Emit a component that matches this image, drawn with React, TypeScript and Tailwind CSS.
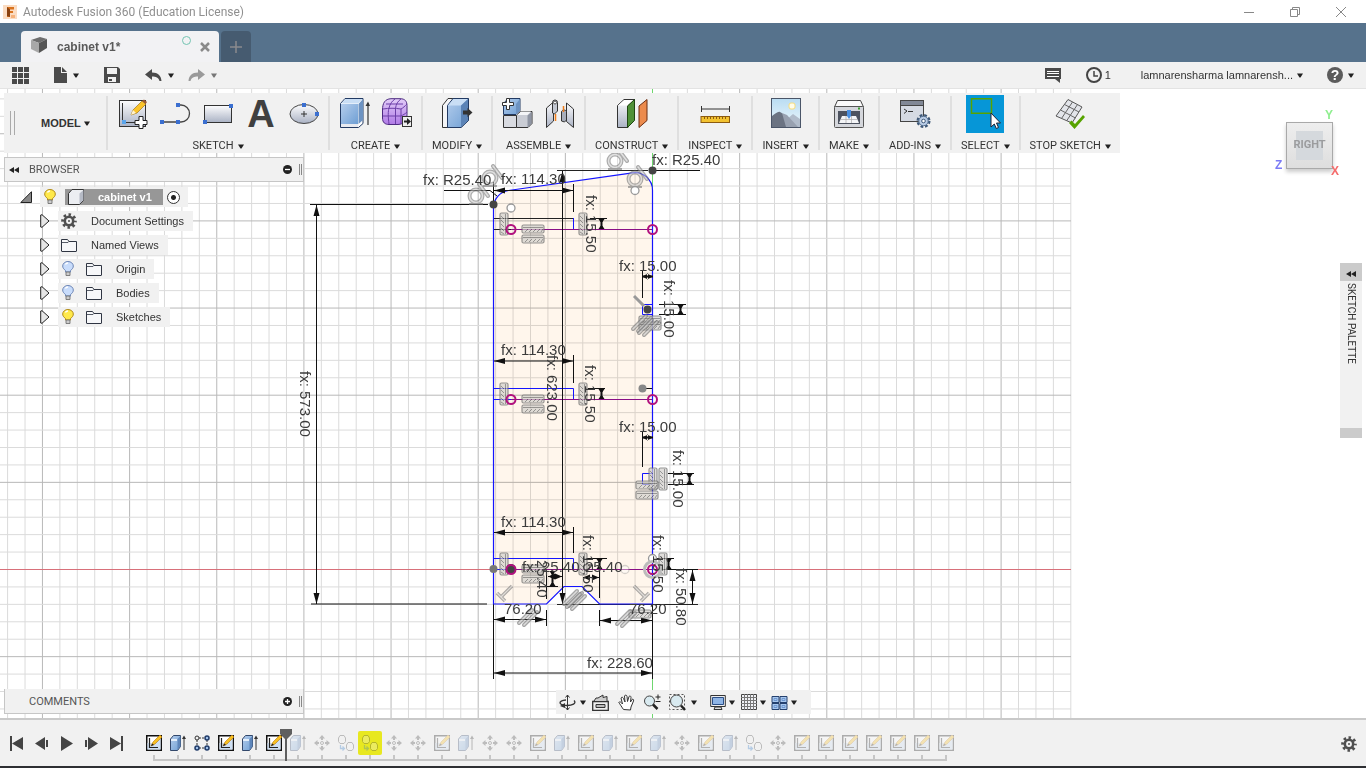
import type { ReactNode } from 'react';
import clsx from 'clsx';

const Caret = ({ className = 'text-[#222]' }: { className?: string }) => (
  <svg width="6" height="5" viewBox="0 0 6 5" className={clsx('shrink-0', className)}>
    <path d="M0 .5h6L3.500 4.500h-1z" fill="currentColor" />
  </svg>
);

const Gradients = () => (
  <svg className="absolute size-0" aria-hidden="true">
    <defs>
      <linearGradient id="steel" x1="0" y1="0" x2="0" y2="1">
        <stop offset="0" stopColor="#fdfdfe" />
        <stop offset="1" stopColor="#aab2c4" />
      </linearGradient>
      <linearGradient id="blue" x1="0" y1="0" x2="1" y2="1">
        <stop offset="0" stopColor="#b4cdec" />
        <stop offset="1" stopColor="#6f9fd4" />
      </linearGradient>
      <linearGradient id="purple" x1="0" y1="0" x2="0" y2="1">
        <stop offset="0" stopColor="#e2cdf8" />
        <stop offset="1" stopColor="#b07ae6" />
      </linearGradient>
      <linearGradient id="sky" x1="0" y1="0" x2="0" y2="1">
        <stop offset="0" stopColor="#b9dcf2" />
        <stop offset="1" stopColor="#eef8fd" />
      </linearGradient>
    </defs>
  </svg>
);

const Icon = ({ size = 32, children }: { size?: number; children: ReactNode }) => (
  <svg
    width={size}
    height={size}
    viewBox={`0 0 ${size} ${size}`}
    fill="none"
    className="shrink-0"
    aria-hidden="true"
  >
    {children}
  </svg>
);

const Node = ({ x, y }: { x: number; y: number }) => (
  <rect x={x - 2} y={y - 2} width="4" height="4" fill="#3b6fd0" />
);

const CreateSketchIcon = () => (
  <Icon>
    <rect x="3.500" y="2.500" width="26" height="26" fill="url(#steel)" stroke="#333" />
    <path d="M6.500 5v20M6 24.500h16" stroke="#333" />
    <rect x="6" y="22" width="4" height="4" fill="#5aa5ec" />
    <path d="m15 17 2-5 9-9 4 3-9 9z" fill="#fbc42a" stroke="#a0761a" strokeWidth=".7" />
    <path d="m26 3 2-1.500 3 2.500-1.500 2z" fill="#9c5a32" />
    <path d="m15 17 2-5 3 3z" fill="#fff3d0" />
    <path d="M23 18.500h4v4h4v4h-4v4h-4v-4h-4v-4h4z" fill="#fff" stroke="#222" />
  </Icon>
);

const LineIcon = () => (
  <Icon>
    <path d="M3 24h19a8.500 8.500 0 0 0 0-17h-3" stroke="#444" strokeWidth="1.300" />
    <Node x={3} y={24} />
    <Node x={19} y={24} />
    <Node x={19} y={7} />
  </Icon>
);

const RectangleIcon = () => (
  <Icon>
    <rect x="2.500" y="7.500" width="27" height="17" fill="url(#steel)" stroke="#333" />
    <Node x={3} y={24} />
    <Node x={29} y={8} />
  </Icon>
);

const TextIcon = () => (
  <span className="flex size-8 items-center justify-center font-['Liberation_Sans',sans-serif] text-[38px] leading-8 font-bold text-[#404040]">
    A
  </span>
);

const EllipseIcon = () => (
  <Icon>
    <ellipse cx="16" cy="16" rx="14" ry="9.500" fill="url(#steel)" stroke="#444" />
    <path d="M16 13v6M13 16h6" stroke="#333" />
    <Node x={16} y={7} />
    <Node x={29} y={16} />
  </Icon>
);

const ExtrudeIcon = () => (
  <Icon>
    <path d="M2.500 5.500 7 .5h18v25l-4.500 4h-18z" fill="#fff" stroke="#223a63" />
    <path d="M3 6h17v20H3z" fill="url(#blue)" />
    <path d="m3 5.500 4.500-4.500h17L20 5.500z" fill="#c9def5" />
    <path d="M20.500 6 25 1v21l-4.500 4z" fill="#6d93c2" />
    <path d="M3 26h17.500v3H3z" fill="#e8eaf0" />
    <path d="M30 5v22" stroke="#333" strokeWidth="1.200" />
    <path d="m27.500 8 2.500-4.500L32 8z" fill="#333" />
  </Icon>
);

const FormIcon = () => (
  <Icon>
    <path d="M1.500 12C1.500 5 4 1 10 .7h9c5 0 7 2.500 7 7v9c0 6-3 9.500-9 9.800H8c-4 0-6.500-2-6.500-6.500z" fill="url(#purple)" stroke="#4d2a80" />
    <path d="M2 11c6-1 12-1 18 0 2-1 4-3 6-5M2 18h18c2-1 4-2 6-4M8 26c-1-7-1-13 0-16 1-4 3-7 6-9M14.500 26V10.500C15 6 17 3 20 1M20 26V11M5 6h17" stroke="#6c3fa8" />
    <rect x="21.500" y="18.500" width="9" height="10" fill="#eee" stroke="#333" />
    <path d="M23 22.500h3v-2.500l4 3.500-4 3.500v-2.500h-3z" fill="#222" />
  </Icon>
);

const ModifyIcon = () => (
  <Icon>
    <path d="M1.500 7.500 7 .5h20v22l-7 7h-18.500z" fill="#f4f5f7" stroke="#333" />
    <path d="M6.500 7.500 12 .5h15.500v22l-7.500 7H6.500z" fill="url(#blue)" stroke="#223a63" />
    <path d="M7 7.500 12.500 1H27l-7 6.500z" fill="#c9def5" />
    <path d="M20 7.500 27 1v21.500l-7 6.500z" fill="#5b83b6" />
    <path d="M22 12.500h4.500V10l5 4.500-5 4.500v-2.500H22z" fill="#333" />
  </Icon>
);

const AssembleIcon = () => (
  <Icon>
    <path d="M2.500 5.500 7 .5h12v12l-4 4H2.500z" fill="url(#blue)" stroke="#223a63" />
    <path d="m15 6 4-5v11.500l-4 4z" fill="#6d93c2" />
    <path d="M2.500 17.500h13v12h-13z" fill="#d9dbe1" stroke="#333" />
    <path d="m15.500 17.500 4-4h11.500v12l-4 4H15.500z" fill="#c9ccd4" stroke="#333" />
    <path d="m16 17 4-3.500h10L26.500 17z" fill="#f4f5f7" />
    <path d="m26.500 17.500 4-3.500v11.500l-4 4z" fill="#8f95a3" />
    <path d="M5.500.5h3v4h4v3h-4v4h-3v-4h-4v-3h4z" fill="#fff" stroke="#333" />
  </Icon>
);

const JointIcon = () => (
  <Icon>
    <path d="m2.500 10 7-6V23l-7 6.500z" fill="url(#steel)" stroke="#333" />
    <path d="M8.500 15V4.500a2.500 2.500 0 0 1 5 0V13l-3 3z" fill="#c3c8d2" stroke="#333" />
    <circle cx="11" cy="4.500" r="1.500" fill="#fff" stroke="#555" />
    <path d="m22.500 5 7 6v18.500l-7-6z" fill="url(#steel)" stroke="#333" />
    <path d="M17.500 23V13.500c1-2 4-2 5 0v8.500l-2 2z" fill="#a8aebb" stroke="#333" />
    <path d="M11.500 16v7M19.500 8v6" stroke="#ef7d1a" strokeWidth="1.500" />
  </Icon>
);

const ConstructIcon = () => (
  <Icon>
    <path d="M1.500 7.500 8 1.500h11l-7 6v22H1.500z" fill="url(#steel)" stroke="#333" />
    <path d="m2 7.500 6.500-5.500H18l-6.500 5.500z" fill="#fff" />
    <path d="m11.500 8 7-6.500v21l-7 7z" fill="#4f9138" stroke="#1f4712" />
    <path d="m23 8 8-6.500v21l-8 7z" fill="#ec8b4d" stroke="#6b2d12" />
  </Icon>
);

const InspectIcon = () => (
  <Icon>
    <path d="M2 11h28M2.500 8v6M30.500 8v6" stroke="#333" />
    <rect x="2" y="18.500" width="28.500" height="6" fill="#f2c230" stroke="#8c5b10" />
    <path d="M5.500 19v2M8.500 19v2M11.500 19v2M14.500 19v2M17.500 19v2M20.500 19v2M23.500 19v2M26.500 19v2" stroke="#8c5b10" />
  </Icon>
);

const InsertIcon = () => (
  <Icon>
    <rect x="1.500" y=".5" width="29" height="29" fill="url(#sky)" stroke="#4a5568" />
    <rect x="19" y="5" width="6" height="6" rx="2" fill="#fffce8" stroke="#f6dc7c" />
    <path d="m16 22 7-6 7 5v8H16z" fill="#b1bccb" />
    <path d="M2 18c3-2 6-5 8-4 3 1 12 12 16 15H2z" fill="#6b7382" />
    <path d="m12 15 5 2 11 12H16z" fill="#98a1b0" />
  </Icon>
);

const MakeIcon = () => (
  <Icon>
    <path d="M4.500 2.500h23l3 6.500H1.500z" fill="#fafafa" stroke="#444" />
    <rect x="1.500" y="8.500" width="29" height="21" rx="1" fill="#d5d7dc" stroke="#555" />
    <rect x="5" y="13" width="22" height="13" fill="#4d5360" />
    <path d="M9 18h14l3 7H6z" fill="#f4f5f7" />
    <path d="M13 18v7M18.500 18v7M8 21.500h16" stroke="#aaa" strokeWidth=".7" />
    <path d="M14 12h4v6l-2 3-2-3z" fill="#4a8fe0" />
    <rect x="25" y="9.500" width="2" height="2" fill="#3b9b2f" />
  </Icon>
);

const AddInsIcon = () => (
  <Icon>
    <rect x="1.500" y="2.500" width="23" height="21" fill="#d5dae3" stroke="#444" />
    <rect x="2" y="3" width="22" height="4" fill="#818896" />
    <path d="M1.500 7.500h23" stroke="#444" />
    <path d="m5 11 3 2-3 2.500M9 13.500h5" stroke="#333" />
    <circle cx="24.500" cy="23" r="5.500" stroke="#3e5878" strokeWidth="3" strokeDasharray="2.600 1.720" />
    <circle cx="24.500" cy="23" r="4.700" fill="#b9cce6" stroke="#5a7596" />
    <circle cx="24.500" cy="23" r="1.800" fill="#fff" stroke="#3e5878" />
  </Icon>
);

const SelectIcon = () => (
  <Icon>
    <rect x="2.500" y=".75" width="20" height="14.500" stroke="#57a300" strokeWidth="1.500" />
    <path d="M22 15v14l3.300-3 2 4.500 2.200-1-2-4.500h4z" fill="#fff" stroke="#223" />
  </Icon>
);

const StopSketchIcon = () => (
  <Icon>
    <path d="m14 1.500 14 7.500-10 16L2 18z" fill="#e3e5ea" stroke="#555" />
    <path d="m18.500 4-11 16.500M23.500 6.500l-11 16.500M10.500 6.500 25 14M6.500 12 21.500 20" stroke="#666" />
    <path d="m15 25 2.500-2.500 3.500 3.500L29 17l2 2-10.500 12z" fill="#57a300" />
  </Icon>
);

type Group = { label: string; icons: ReactNode[]; active?: boolean };

const groups: Group[] = [
  {
    label: 'SKETCH',
    icons: [<CreateSketchIcon />, <LineIcon />, <RectangleIcon />, <TextIcon />, <EllipseIcon />],
  },
  { label: 'CREATE', icons: [<ExtrudeIcon />, <FormIcon />] },
  { label: 'MODIFY', icons: [<ModifyIcon />] },
  { label: 'ASSEMBLE', icons: [<AssembleIcon />, <JointIcon />] },
  { label: 'CONSTRUCT', icons: [<ConstructIcon />] },
  { label: 'INSPECT', icons: [<InspectIcon />] },
  { label: 'INSERT', icons: [<InsertIcon />] },
  { label: 'MAKE', icons: [<MakeIcon />] },
  { label: 'ADD-INS', icons: [<AddInsIcon />] },
  { label: 'SELECT', icons: [<SelectIcon />], active: true },
  { label: 'STOP SKETCH', icons: [<StopSketchIcon />] },
];

const Toolbar = () => (
  <div className="relative mt-1 ml-1 flex h-15 self-start bg-[#f1f1f1]">
    <div className="flex w-[102px] items-center pl-[6px]">
      <span className="h-6 w-[5px] border-x border-[#aaa]" />
      <button
        type="button"
        className="ml-[26px] flex items-center gap-[3px] text-[11px] font-bold text-[#333]"
      >
        MODEL
        <Caret />
      </button>
    </div>
    {groups.map(({ label, icons, active }) => (
      <div key={label} className="flex">
        <span className="my-[3px] w-[2px] bg-[#dfdfdf]" />
        <div className="flex flex-col items-center px-2 pt-[2px]">
          <div className="flex gap-[11px]">
            {icons.map((icon, i) => (
              <button
                key={i}
                type="button"
                aria-label={label}
                className={clsx(
                  'flex h-[38px] items-center justify-center',
                  active ? 'w-[38px] bg-[#0696d7]' : 'w-8',
                )}
              >
                {icon}
              </button>
            ))}
          </div>
          <button
            type="button"
            className="mt-[7px] flex h-[13px] items-center gap-1 px-px font-[Roboto,sans-serif] text-[11px] whitespace-nowrap text-[#333]"
          >
            {label}
            <Caret />
          </button>
        </div>
      </div>
    ))}
  </div>
);

const TitleBar = () => (
  <header className="flex h-[23px] shrink-0 items-center bg-white pl-[3px]">
    <svg width="14" height="14" viewBox="0 0 14 14" aria-hidden="true">
      <rect width="14" height="14" fill="#fbdcc2" />
      <path d="M4 2h7v2.500H7V6h3v2H7v4H4z" fill="#d9731e" />
      <path d="M4 2 7 4.500V12l-3-1z" fill="#8a4210" />
      <path d="M8 10h4v3H8z" fill="#f6b27c" />
    </svg>
    <h1 className="ml-[6px] font-[Roboto,sans-serif] text-xs text-[#8f8f8f]">
      Autodesk Fusion 360 (Education License)
    </h1>
    <div className="ml-auto flex items-center gap-9 pr-5 text-[#888]">
      <button type="button" aria-label="Minimize">
        <svg width="10" height="10" fill="none" stroke="currentColor">
          <path d="M0 5.500h10" />
        </svg>
      </button>
      <button type="button" aria-label="Restore">
        <svg width="10" height="10" fill="none" stroke="currentColor">
          <path d="M.5 2.500h7v7h-7zM2.500 2.500v-2h7v7h-2" />
        </svg>
      </button>
      <button type="button" aria-label="Close">
        <svg width="10" height="10" fill="none" stroke="currentColor">
          <path d="m0 0 10 10M10 0 0 10" />
        </svg>
      </button>
    </div>
  </header>
);

const TabBar = () => (
  <nav className="flex h-[39px] shrink-0 items-end gap-[2px] bg-[#56728c] pl-[21px]">
    <div className="flex h-[31px] w-[198px] items-center rounded-t bg-[#f2f2f4] pr-[9px] pl-[10px]">
      <svg width="16" height="16" viewBox="0 0 16 16" className="mb-1" aria-hidden="true">
        <path d="M0 3 9 0l7 2-8 4z" fill="#6e6e6e" />
        <path d="m0 3 8 3v10L0 12z" fill="#a8a8a8" />
        <path d="m8 6 8-4v9l-8 5z" fill="#555" />
      </svg>
      <span className="ml-[10px] text-xs font-bold text-[#5a5a5a]">cabinet v1*</span>
      <span className="mb-3 ml-auto size-[9px] rounded-full border-[1.5px] border-[#74c4b2]" />
      <button type="button" aria-label="Close tab" className="ml-[9px] text-[#8a8a8a]">
        <svg width="10" height="10" stroke="currentColor" strokeWidth="2.500">
          <path d="m1 1 8 8M9 1 1 9" />
        </svg>
      </button>
    </div>
    <button
      type="button"
      aria-label="New tab"
      className="flex h-[31px] w-[30px] items-center justify-center rounded-t bg-[#465b70] text-[#8b8b8d]"
    >
      <svg width="12" height="12" stroke="currentColor" strokeWidth="1.500">
        <path d="M6 0v12M0 6h12" />
      </svg>
    </button>
  </nav>
);

const QuickAccess = () => (
  <div className="flex h-[27px] shrink-0 items-center border-b border-[#e3e3e3] bg-[#f1f1f1] pr-3 pl-3 text-[#4a4a4a]">
    <button type="button" aria-label="Data panel">
      <svg width="17" height="17" fill="currentColor">
        <path d="M0 0h5v5H0zM6 0h5v5H6zM12 0h5v5h-5zM0 6h5v5H0zM6 6h5v5H6zM12 6h5v5h-5zM0 12h5v5H0zM6 12h5v5H6zM12 12h5v5h-5z" />
      </svg>
    </button>
    <button type="button" aria-label="File" className="ml-6 flex items-center gap-[6px]">
      <svg width="14" height="16" fill="currentColor">
        <path d="M1 0h7v6h6v10H1zM9 0l5 5H9z" />
      </svg>
      <Caret />
    </button>
    <button type="button" aria-label="Save" className="ml-[25px]">
      <svg width="16" height="16" fill="currentColor" fillRule="evenodd">
        <path d="M0 0h14l2 2v14H0zM3 1v6h10V1zM4 10v5h8v-5zM5 12h3v2H5z" />
      </svg>
    </button>
    <button type="button" aria-label="Undo" className="ml-[25px] flex items-center gap-[6px]">
      <svg width="17" height="12" fill="currentColor">
        <path d="M0 5.500 7 0v3.500c6 0 9 3 9.500 8.500h-2c-1-3.500-3.500-4.500-7.500-4.500V11z" />
      </svg>
      <Caret />
    </button>
    <button type="button" aria-label="Redo" className="ml-[14px] flex items-center gap-[6px] text-[#9a9a9a]">
      <svg width="17" height="12" fill="currentColor">
        <path d="M17 5.500 10 0v3.500C4 3.500 1 6.500.5 12h2C3.500 8.500 6 7.500 10 7.500V11z" />
      </svg>
      <Caret className="text-[#777]" />
    </button>
    <button type="button" aria-label="Comments" className="ml-auto">
      <svg width="16" height="15" viewBox="0 0 16 15">
        <path d="M0 0h16v11h-1v4l-5-4H0z" fill="#4a4a4a" />
        <path d="M2 3.500h12M2 5.500h12M2 8.500h12" stroke="#fff" />
      </svg>
    </button>
    <button type="button" className="ml-[25px] flex items-center gap-[3px] text-[11px] text-[#333]">
      <svg width="16" height="16" fill="none" stroke="#444" strokeWidth="2">
        <circle cx="8" cy="8" r="7" />
        <path d="M8 4v5h4" strokeWidth="1.500" />
      </svg>
      1
    </button>
    <button type="button" className="ml-[30px] flex items-center gap-1 text-[11px] text-[#333]">
      lamnarensharma lamnarensh...
      <Caret />
    </button>
    <button type="button" aria-label="Help" className="ml-6 flex items-center gap-[5px]">
      <span className="flex size-4 items-center justify-center rounded-full bg-[#5c5c5c] text-sm leading-4 font-bold text-white">
        ?
      </span>
      <Caret />
    </button>
  </div>
);

const Bulb = ({ lit }: { lit?: boolean }) => (
  <svg width="12" height="16" viewBox="0 0 12 16" aria-hidden="true">
    <path d="M3.500 9.500C1.500 8 .7 6.700.7 5a5.300 4.500 0 0 1 10.600 0c0 1.700-.8 3-2.800 4.500V11h-5z" fill={lit ? '#ffe94a' : '#c8dcfb'} stroke={lit ? '#b08a1a' : '#6d86b5'} />
    <path d="M3.500 3.500Q4 2 6 2" stroke="#fff" strokeWidth="1.500" fill="none" />
    <path d="M4 11h4v3.500H4z" fill="#ccc" stroke="#666" strokeWidth=".8" />
  </svg>
);

const Folder = () => (
  <svg width="16" height="14" viewBox="0 0 16 14" aria-hidden="true">
    <path d="M.5 13V1.500h6l1.500 2h7.500V13q0 .5-.5.500H1q-.5 0-.5-.5z" fill="#f6f7f9" stroke="#2f3542" />
    <path d="M1 4.500h6L8.500 3" fill="none" stroke="#2f3542" strokeWidth=".8" />
  </svg>
);

const Gear = ({ size = 16 }: { size?: number }) => (
  <svg width={size} height={size} viewBox="0 0 16 16" fill="none" stroke="#4f4f4f" aria-hidden="true">
    <circle cx="8" cy="8" r="6.400" strokeWidth="2.800" strokeDasharray="2.500 2.527" strokeDashoffset="1.250" />
    <circle cx="8" cy="8" r="4.200" strokeWidth="2.600" />
    <circle cx="8" cy="8" r="1" fill="#4f4f4f" stroke="none" />
  </svg>
);

const Expander = () => (
  <button type="button" aria-label="Expand" className="shrink-0">
    <svg width="10" height="14" viewBox="0 0 10 14">
      <path d="M.7 1 2 .7 9 7l-7 6.300-1.300-.3z" fill="#e6e6e6" stroke="#222" />
    </svg>
  </button>
);

type TreeItem = { label: string; gear?: boolean; bulb?: 'on' | 'off' };

const tree: TreeItem[] = [
  { label: 'Document Settings', gear: true },
  { label: 'Named Views' },
  { label: 'Origin', bulb: 'off' },
  { label: 'Bodies', bulb: 'off' },
  { label: 'Sketches', bulb: 'on' },
];

const Rewind = () => (
  <svg width="10" height="6" viewBox="0 0 10 6" fill="#222" aria-hidden="true">
    <path d="M5 0v6L0 3zM10 0v6L5 3z" />
  </svg>
);

const PanelBar = ({ title, open }: { title: string; open?: boolean }) => (
  <div
    className={clsx(
      'flex h-[25px] w-[300px] items-center border-[#c6c6c6] bg-[#f1f1f1] pr-px',
      open ? 'border' : 'border-x border-b',
    )}
  >
    <button type="button" aria-label={`Toggle ${title}`} className="w-6 pl-1">
      {open && <Rewind />}
    </button>
    <h2 className="pt-[2px] font-[Roboto,sans-serif] text-[11px] text-[#555]">{title}</h2>
    <button type="button" aria-label={open ? 'Collapse' : 'Expand'} className="ml-auto">
      <svg width="9" height="9" viewBox="0 0 9 9">
        <circle cx="4.500" cy="4.500" r="4.500" fill="#222" />
        <path d={open ? 'M2 4.500h5' : 'M2 4.500h5M4.500 2v5'} stroke="#fff" strokeWidth="1.300" />
      </svg>
    </button>
    <span className="ml-[7px] h-[11px] w-[3px] border-x border-[#888]" />
  </div>
);

const Browser = () => (
  <section className="relative mt-1 ml-1 w-[300px]">
    <PanelBar title="BROWSER" open />
    <ul className="mt-[3px] text-[11px] text-[#333]">
      <li className="flex h-6 items-center pl-4">
        <button type="button" aria-label="Collapse cabinet v1">
          <svg width="12" height="12" viewBox="0 0 12 12">
            <path d="M11.500.7v10.800H.8z" fill="#888" stroke="#222" />
          </svg>
        </button>
        <div className="ml-2 flex h-5 items-center bg-[#f1f1f1] pr-2 pl-1">
          <Bulb lit />
          <button
            type="button"
            className="ml-[9px] flex h-4 w-[98px] items-center gap-[14px] bg-[#979797] pl-[3px] font-bold text-white"
          >
            <svg width="16" height="16" viewBox="0 0 16 16">
              <path d="M.5 4.500 4 .5h11.500v11l-4 4H.5z" fill="#eceef2" stroke="#333" />
              <path d="M11.500 4.500v10.500l4-4V1z" fill="#b5bac5" />
            </svg>
            cabinet v1
          </button>
          <input
            type="radio"
            defaultChecked
            aria-label="Activate cabinet v1"
            className="ml-1 size-[13px] appearance-none rounded-full border border-[#333] bg-[radial-gradient(circle,#222_2px,white_3px)]"
          />
        </div>
      </li>
      {tree.map(({ label, gear, bulb }) => (
        <li key={label} className="flex h-6 items-center pl-9">
          <Expander />
          <div className="ml-2 flex h-5 items-center bg-[#f1f1f1] pr-[9px] pl-[3px]">
            {bulb && (
              <span className="mr-3 ml-px">
                <Bulb lit={bulb === 'on'} />
              </span>
            )}
            {gear ? <Gear /> : <Folder />}
            <span className="ml-[14px]">{label}</span>
          </div>
        </li>
      ))}
    </ul>
  </section>
);

/* ---- sketch canvas ---- */

const STEP = 17.43;
const columns = Array.from({ length: 62 }, (_, i) => i - 37);
const rows = Array.from({ length: 37 }, (_, i) => i - 28).filter((k) => k !== 0);

const Grid = () => (
  <g>
    {columns.map((k) => (
      <path key={k} d={`M${652.5 + k * STEP} 89V768`} stroke={k % 5 ? '#dbdbdb' : '#b8b8b8'} />
    ))}
    {rows.map((k) => (
      <path key={k} d={`M0 ${569.5 + k * STEP}H1071`} stroke={k % 5 ? '#dbdbdb' : '#b8b8b8'} />
    ))}
    <path d="M0 569.500H1071" stroke="#d8707a" />
    <path d="M652.500 89V768" stroke="#6fd66f" />
  </g>
);

type DimProps = { from: number; to: number; at: number; head?: number };

const DimH = ({ from, to, at, head = 11 }: DimProps) => (
  <g>
    <path d={`M${from} ${at}H${to}`} stroke="#111" strokeWidth={head < 7 ? 2 : 1} />
    <path d={`M${from} ${at}l${head}-3v6zM${to} ${at}l${-head}-3v6z`} fill="#111" />
  </g>
);

const DimV = ({ from, to, at, head = 11 }: DimProps) => (
  <g>
    <path d={`M${at} ${from}V${to}`} stroke="#111" strokeWidth={head < 7 ? 2 : 1} />
    {head < 7 ? (
      <path d={`M${at - 3} ${from}h6l-2 3h-2zM${at - 3} ${to}h6l-2-3h-2z`} fill="#111" />
    ) : (
      <path d={`M${at} ${from}l-3 ${head}h6zM${at} ${to}l-3 ${-head}h6z`} fill="#111" />
    )}
  </g>
);

const Bars = ({ x, y, vertical }: { x: number; y: number; vertical?: boolean }) => (
  <g
    transform={vertical ? `translate(${x} ${y}) rotate(90)` : `translate(${x} ${y})`}
    stroke="#6b6b6b"
    opacity=".7"
  >
    <rect x="-11" y="-4" width="22" height="8" rx="1.500" fill="#d2d0cc" strokeWidth="1.200" />
    <path d="M-10-1.500h20" />
    <path d="m-8 3 3-3m1 3 3-3m1 3 3-3m1 3 3-3m1 3 2-3" />
  </g>
);

const Tangent = ({ x, y }: { x: number; y: number }) => (
  <g transform={`translate(${x} ${y})`} fill="none" opacity=".6">
    <circle r="6.500" stroke="#777" strokeWidth="4" />
    <circle r="6.500" stroke="#ccc" strokeWidth="1.500" />
    <path d="m3-12 9 12" stroke="#777" strokeWidth="4" strokeLinecap="round" />
    <path d="m3-12 9 12" stroke="#ccc" strokeWidth="1.500" strokeLinecap="round" />
    <path d="m-7 8h14" stroke="#777" strokeWidth="2" />
  </g>
);

const Parallel = ({ x, y }: { x: number; y: number }) => (
  <g transform={`translate(${x} ${y})`} strokeLinecap="round" opacity=".65">
    <path d="M-9 6 4-7M-4 8 9-5" stroke="#777" strokeWidth="4" />
    <path d="M-9 6 4-7M-4 8 9-5" stroke="#ccc" strokeWidth="1.500" />
  </g>
);

const Perpendicular = ({ x, y, flip }: { x: number; y: number; flip?: boolean }) => (
  <g transform={`translate(${x} ${y}) scale(${flip ? -1 : 1} 1)`} opacity=".6">
    <path d="M7-8-4 3M-8-1l8 8" stroke="#777" strokeWidth="3.500" fill="none" />
    <path d="M7-8-4 3M-8-1l8 8" stroke="#ccc" strokeWidth="1.200" fill="none" />
  </g>
);

const labels: [number, number, string][] = [
  [423, 185, 'fx: R25.40'],
  [501, 184, 'fx: 114.30'],
  [652, 165, 'fx: R25.40'],
  [619, 271, 'fx: 15.00'],
  [501, 355, 'fx: 114.30'],
  [619, 432, 'fx: 15.00'],
  [501, 527, 'fx: 114.30'],
  [522, 572, 'fx: 25.40'],
  [585, 572, '25.40'],
  [504, 614, '76.20'],
  [629, 614, '76.20'],
  [587, 668, 'fx: 228.60'],
];

const uprightLabels: [number, number, string][] = [
  [300, 371, 'fx: 573.00'],
  [586, 195, 'fx: 15.50'],
  [664, 280, 'fx: 15.00'],
  [547, 355, 'fx: 623.00'],
  [585, 365, 'fx: 15.50'],
  [673, 450, 'fx: 15.00'],
  [583, 535, 'fx: 15.50'],
  [653, 535, 'fx: 15.50'],
  [676, 568, 'fx: 50.80'],
  [537, 560, '25.40'],
];

const outline =
  'M493.500 604V208A17.600 17.600 0 0 1 508.500 190.500L632.500 172.800A17.600 17.600 0 0 1 652.500 190.500V604H599.500L582 586.500H564L546.500 604Z';

const SketchCanvas = () => (
  <svg className="absolute inset-0 size-full bg-white" role="img" aria-label="Sketch of cabinet v1">
    <g transform="translate(0 -89)" fill="none">
      <Grid />
      <path d={outline} fill="#fff6ec" className="mix-blend-multiply" />
      <path
        d="M493.500 218.500H573M493.500 229.500H511M557 604.500H698M557 170.500H648"
        stroke="#222"
      />

      {/* extension lines */}
      <path
        d="M310 204.500H488M311 604H487M493.500 604V679M652.500 604V679M546.500 571V599M599.500 566V598M546.500 610V626M599.500 610V626M573.500 184V212M573.500 355V383M573.500 527V553M493.500 182V204M444 190.500H490L497 196M654 170.500H700M590 218.500H607M590 229.500H607M642.500 271V298M642.500 432V467M588 388.500H605M588 399.500H607M659 304.500H686M659 314.500H686M668 473.500H694M668 484.500H694M642 388.500H652M547 586.500H558M586 558.500H607M656 558.500H674M654 569.500H698"
        stroke="#111"
      />
      <path d={outline} stroke="#1414ff" strokeWidth="1.200" />
      <path
        d="M573.500 218V229M493 388.500H573.500V399M493 399.500H511M493 558.500H573.500V569M493 569.500H511M642.500 304.500H652.500V314.500H642.500zM642.500 473.500H652.500V484.500H642.500z"
        stroke="#1414ff"
      />
      <path d="M511 229.500H652M511 399.500H652M511 569.500H652" stroke="#8a0f86" />
      <DimV at={316.5} from={205} to={604} />
      <DimV at={562.5} from={171} to={604} />
      <DimV at={692.5} from={570} to={604} />
      <DimH at={190.5} from={494} to={573} />
      <DimH at={361} from={494} to={573} />
      <DimH at={532.5} from={494} to={573} />
      <DimH at={619.5} from={494} to={546} />
      <DimH at={620.5} from={600} to={652} />
      <DimH at={673} from={494} to={652} />
      <DimH at={276.5} from={642} to={653} head={6} />
      <DimH at={437.5} from={642} to={653} head={6} />
      <DimH at={576.5} from={548} to={562} head={7} />
      <DimH at={577.5} from={583} to={599} head={7} />
      <DimV at={601.5} from={219} to={229} head={5} />
      <DimV at={601.5} from={389} to={399} head={5} />
      <DimV at={599.5} from={559} to={569} head={5} />
      <DimV at={668.5} from={559} to={569} head={5} />
      <DimV at={680.5} from={305} to={314} head={5} />
      <DimV at={689.5} from={474} to={484} head={5} />
      <DimV at={552.5} from={571} to={586} head={6} />

      {/* constraints */}
      <Tangent x={490} y={178} />
      <Tangent x={476} y={196} />
      <Tangent x={615} y={161} />
      <Tangent x={635} y={179} />
      {[224, 394, 564].map((y) => (
        <g key={y}>
          <Bars x={504} y={y} vertical />
          <Bars x={583} y={y} vertical />
          <Bars x={533} y={y + 5} />
          <Bars x={533} y={y + 15} />
        </g>
      ))}
      <Bars x={650} y={320} />
      <Bars x={650} y={326} />
      <Bars x={653} y={479} vertical />
      <Bars x={663} y={479} vertical />
      <Bars x={647} y={485} />
      <Bars x={647} y={495} />
      <Bars x={663} y={564} vertical />
      <Bars x={640} y={614} />
      <Parallel x={642} y={323} />
      <Parallel x={648} y={327} />
      <Parallel x={573} y={598} />
      <Parallel x={576} y={601} />
      <Parallel x={528} y={617} />
      <Parallel x={626} y={618} />
      <path d="m634 296 10 10" stroke="#999" strokeWidth="3" />
      <Perpendicular x={505} y={594} />
      <Perpendicular x={641} y={594} flip />

      {/* points */}
      <g stroke="#999" strokeWidth="1.300" fill="#fff">
        <circle cx="511" cy="208" r="4" />
        <circle cx="635" cy="190.500" r="4" />
        <circle cx="652.500" cy="558.500" r="4" />
        <circle cx="625" cy="569.500" r="4" opacity=".4" />
      </g>
      <circle cx="652.500" cy="569.500" r="8" stroke="#bbb" strokeWidth="3" />
      <circle cx="493.500" cy="204.500" r="4" fill="#444" />
      <circle cx="652.500" cy="170.500" r="4" fill="#444" />
      <circle cx="647.500" cy="309.500" r="4" fill="#444" />
      <circle cx="642.500" cy="388.500" r="4" fill="#888" />
      <circle cx="493.500" cy="569" r="4" fill="#777" />
      <circle cx="511" cy="569" r="5" fill="#444" />
      <g stroke="#b1107e" strokeWidth="2">
        {[229.5, 399.5, 569.5].map((y) => (
          <g key={y}>
            <circle cx="511" cy={y} r="4.500" />
            <circle cx="652.500" cy={y} r="4.500" />
          </g>
        ))}
      </g>

      <g fill="#3c3c3c" fontSize="15" fontFamily="'Liberation Sans', Arial, sans-serif">
        {labels.map(([x, y, text]) => (
          <text key={`${x}-${y}`} x={x} y={y}>
            {text}
          </text>
        ))}
        {uprightLabels.map(([x, y, text]) => (
          <text key={`${x}-${y}`} transform={`translate(${x} ${y}) rotate(90)`}>
            {text}
          </text>
        ))}
      </g>
    </g>
  </svg>
);

const ViewCube = () => (
  <div className="absolute top-[33px] right-[33px]">
    <button
      type="button"
      className="flex size-[47px] items-center justify-center border border-[#a9a9a9] bg-linear-to-b from-[#eeeeee] to-[#dedede] shadow-[0_3px_4px_#0003]"
    >
      <span className="flex h-[29px] w-[27px] items-center justify-center bg-[#d5d9dd] font-[Roboto,sans-serif] text-[11px] font-bold text-[#9b9c9e]">
        RIGHT
      </span>
    </button>
    <span className="absolute -top-[15px] right-0 text-xs font-bold text-[#8fee8f]">Y</span>
    <span className="absolute top-[35px] -left-[11px] text-xs font-bold text-[#7b7bf5]">Z</span>
    <span className="absolute top-[41px] -right-[6px] text-xs font-bold text-[#f56b6b]">X</span>
  </div>
);

const SketchPalette = () => (
  <aside className="absolute top-[174px] right-1 flex w-[22px] flex-col bg-[#f1f1f1]">
    <button
      type="button"
      aria-label="Expand palette"
      className="flex h-[18px] items-center justify-center bg-[#cbcbcb] pt-1"
    >
      <Rewind />
    </button>
    <h2 className="flex h-[147px] items-center pt-[2px] font-[Roboto,sans-serif] text-[10px] leading-5 whitespace-nowrap text-[#333] [writing-mode:vertical-rl]">
      SKETCH PALETTE
    </h2>
    <span className="h-[10px] bg-[#cbcbcb]" />
  </aside>
);

const NavBar = () => (
  <div className="flex h-6 items-center bg-[#f1f1f1] pr-[14px] pl-[3px]">
    <button type="button" aria-label="Orbit" className="flex items-center gap-1">
      <Icon size={17}>
        <path d="M8.500 1v15M6.500 3.500l2-2.500 2 2.500M6.500 13.500l2 2.500 2-2.500" stroke="#333" />
        <path d="M15 6.500c3 3-2 5-7 5-3 0-6-.5-7-2.500 0-1.500 3-2.700 6-3" stroke="#333" strokeWidth="1.300" />
        <path d="m1 12 5-3v5z" fill="#333" />
      </Icon>
      <Caret />
    </button>
    <button type="button" aria-label="Look at" className="ml-[6px]">
      <Icon size={17}>
        <path d="M.7 7.500h15.600v8.800H.7z" fill="#eee" stroke="#333" strokeWidth="1.300" />
        <path d="M4 10.500h9v3H4z" fill="#bbb" stroke="#333" />
        <path d="m2 7 2-3h2l5-3v2.500l4-1V7" fill="#ccc" stroke="#333" />
      </Icon>
    </button>
    <button type="button" aria-label="Pan" className="ml-[9px]">
      <Icon size={17}>
        <path d="M5.500 15.500C3 12 2 10 .8 8.500c1-1.500 2.500 0 3.700 1.500L3 4c1-1.500 2-.5 2.500.5L7 8 6.500 2C7.500.3 8.700 1 9 2.500l.5 5L11 2.500c1-1 2-.3 2 1L12.500 8 14 5.500c1-.7 2 0 1.500 1.500L13 13l-.5 3z" fill="#fff" stroke="#333" />
      </Icon>
    </button>
    <button type="button" aria-label="Zoom" className="ml-2">
      <Icon size={18}>
        <circle cx="6.500" cy="8" r="5" fill="#d9eaf0" stroke="#444" />
        <path d="m10 11.500 4.500 4.500" stroke="#222" strokeWidth="2.500" />
        <path d="M12.500 4h5M15 1.500v5M12.500 8.500h5" stroke="#222" />
      </Icon>
    </button>
    <button type="button" aria-label="Fit" className="ml-2 flex items-center gap-[5px]">
      <Icon size={17}>
        <path d="M.5.500h15v15H.5z" stroke="#555" strokeDasharray="2 2" />
        <circle cx="7.500" cy="7" r="6" fill="#d9eaf0" stroke="#444" />
        <path d="m12 11.500 4 4.500" stroke="#222" strokeWidth="2.500" />
      </Icon>
      <Caret />
    </button>
    <button type="button" aria-label="Display settings" className="ml-[13px] flex items-center gap-[3px]">
      <Icon size={16}>
        <path d="M.7 1.500h14.600v11H.7z" fill="#eee" stroke="#333" />
        <path d="M2.500 3.500h11v7h-11z" fill="#8fb5e6" stroke="#2c4f87" />
        <path d="M5 13h6l1 2.500H4z" fill="#ddd" stroke="#333" />
      </Icon>
      <Caret />
    </button>
    <button type="button" aria-label="Grid and snaps" className="ml-[6px] flex items-center gap-[3px]">
      <Icon size={16}>
        <path d="M.5.500h15v15H.5z" fill="#f0f1f5" stroke="#444" />
        <path d="M3.500 0v16M6.500 0v16M9.500 0v16M12.500 0v16M0 3.500h16M0 6.500h16M0 9.500h16M0 12.500h16" stroke="#777" />
      </Icon>
      <Caret />
    </button>
    <button type="button" aria-label="Viewports" className="ml-[5px] flex items-center gap-[3px]">
      <Icon size={17}>
        <path d="M1 2.500h7v6H1zM9 2.500h7v6H9zM1 9.500h7v6H1zM9 9.500h7v6H9z" fill="#a9c8ee" stroke="#24406e" />
        <path d="M3 4.500h3v2H3zM11 4.500h3v2h-3zM3 11.500h3v2H3zM11 11.500h3v2h-3z" stroke="#5f8bc9" strokeWidth=".8" />
      </Icon>
      <Caret />
    </button>
  </div>
);

/* ---- timeline ---- */

const features = {
  sketch: (
    <Icon size={16}>
      <rect x=".75" y=".75" width="14.500" height="14.500" fill="#fff" stroke="#111" strokeWidth="1.500" />
      <path d="M1.500 8h7l6-6v12.500h-13z" fill="#cfe0f4" />
      <path d="M3.500 3v9.500H12" stroke="#222" strokeWidth="1.200" />
      <path d="m5 11 2-4 7-7 2 2-7 7z" fill="#f8c021" stroke="#b5730f" strokeWidth=".6" />
      <path d="m5 11 1.300-2.600L8 10z" fill="#222" />
    </Icon>
  ),
  extrude: (
    <Icon size={16}>
      <path d="M.5 4 3.500.5h7v11l-3 4h-7z" fill="url(#blue)" stroke="#33486b" />
      <path d="M7.500 4v11l3-4V1z" fill="#5e86ba" />
      <path d="M1 4h6v2H1z" fill="#e4effb" />
      <path d="M14 2v13" stroke="#333" />
      <path d="m12 4 2-3.500L16 4z" fill="#333" />
    </Icon>
  ),
  pattern: (
    <Icon size={16}>
      <path d="M5 3h7M3 5v6M5 13h7M13 5v6" stroke="#333" strokeDasharray="2 1" />
      <circle cx="3" cy="3" r="2" fill="#eee" stroke="#333" />
      <circle cx="13" cy="3" r="2" fill="#9fc0ea" stroke="#1f3a68" strokeWidth="1.500" />
      <circle cx="3" cy="13" r="2" fill="#9fc0ea" stroke="#1f3a68" strokeWidth="1.500" />
      <circle cx="13" cy="13" r="2" fill="#9fc0ea" stroke="#1f3a68" strokeWidth="1.500" />
    </Icon>
  ),
  move: (
    <Icon size={16}>
      <path d="m8 0 3 3.500H9V5H7V3.500H5zM8 16l3-3.500H9V11H7v1.500H5zM0 8l3.500-3v2H5v2H3.500v2zM16 8l-3.500-3v2H11v2h1.500v2z" fill="#444" />
      <circle cx="8" cy="8" r="1.500" stroke="#444" />
    </Icon>
  ),
  copy: (
    <Icon size={16}>
      <path d="M.5 3 2 .5h4L7.500 3v3.500L6 8.500H2L.5 6.500z" fill="#f2f2f2" stroke="#444" />
      <path d="m8.500 10 1.500-2.500h4l1.500 2.500v3.500l-1.500 2h-4l-1.500-2z" fill="#f2f2f2" stroke="#444" />
      <path d="M2.500 10v3.500H6M4.500 11.500l2 2-2 2" stroke="#2f78c8" strokeWidth="1.300" />
    </Icon>
  ),
};

type Feature = keyof typeof features;

const timeline: Feature[] = [
  'sketch', 'extrude', 'pattern', 'sketch', 'extrude', 'sketch', 'extrude',
  'move', 'copy', 'copy', 'move', 'move', 'sketch', 'extrude', 'move', 'move',
  'sketch', 'extrude', 'sketch', 'extrude', 'sketch', 'extrude', 'move',
  'sketch', 'extrude', 'copy', 'move', 'sketch', 'sketch', 'sketch', 'sketch',
  'sketch', 'sketch', 'sketch',
];

const MARKER = 6;
const HIGHLIGHTED = 9;

const playback = [
  { label: 'Go to start', d: 'M0 0h2v15H0zM13 1v13L2 7.500z' },
  { label: 'Step back', d: 'M10 1v13L0 7.500zM11 4h2v7h-2z' },
  { label: 'Play', d: 'M1 0l12 7.500L1 15z' },
  { label: 'Step forward', d: 'M0 4h2v7H0zM3 1v13l10-6.500z' },
  { label: 'Go to end', d: 'M0 1v13l11-6.500zM11 0h2v15h-2z' },
];

const Timeline = () => (
  <footer className="flex h-12 shrink-0 items-start border-t-2 border-[#c9c9c9] bg-[#f1f1f1]">
    <div className="flex gap-3 pt-4 pl-[10px]">
      {playback.map(({ label, d }) => (
        <button key={label} type="button" aria-label={label}>
          <svg width="13" height="15" fill="#444">
            <path d={d} />
          </svg>
        </button>
      ))}
    </div>
    <ol className="ml-[19px] flex pt-[11px]">
      {timeline.map((feature, i) => (
        <li key={i} className="relative flex w-6 flex-col items-center">
          <button
            type="button"
            aria-label={feature}
            className={clsx(
              'flex size-6 items-center justify-center',
              i === HIGHLIGHTED && 'rounded-xs bg-[#e8e820]',
            )}
          >
            <span className={clsx(i >= MARKER && 'opacity-30')}>{features[feature]}</span>
          </button>
          <span className="h-1 w-[2px] bg-[#c6c6c6]" />
          <span
            className={clsx(
              'h-[2px] bg-[#c6c6c6]',
              i > 0 && i < timeline.length - 1 ? 'w-6' : 'w-[13px]',
              i === 0 && 'self-end',
              i === timeline.length - 1 && 'self-start',
            )}
          />
          {i === MARKER && (
            <svg width="12" height="32" className="absolute -top-[2px] -left-[6px]" fill="#5f5f5f">
              <path d="M0 0h12v5L7 10v22H5V10L0 5z" />
            </svg>
          )}
        </li>
      ))}
    </ol>
    <button type="button" aria-label="Timeline settings" className="mt-4 mr-[9px] ml-auto">
      <Gear />
    </button>
  </footer>
);

export default function App() {
  return (
    <div className="flex h-screen flex-col overflow-hidden bg-white font-['Liberation_Sans',Arial,sans-serif]">
      <Gradients />
      <TitleBar />
      <TabBar />
      <QuickAccess />
      <main className="relative flex flex-1 flex-col overflow-hidden">
        <SketchCanvas />
        <Toolbar />
        <Browser />
        <div className="relative mt-auto mb-1 grid grid-cols-[1fr_auto_1fr] items-end px-1">
          <PanelBar title="COMMENTS" />
          <NavBar />
        </div>
        <ViewCube />
        <SketchPalette />
      </main>
      <Timeline />
      <div className="h-[2px] shrink-0 bg-[#2e2f33]" />
    </div>
  );
}
